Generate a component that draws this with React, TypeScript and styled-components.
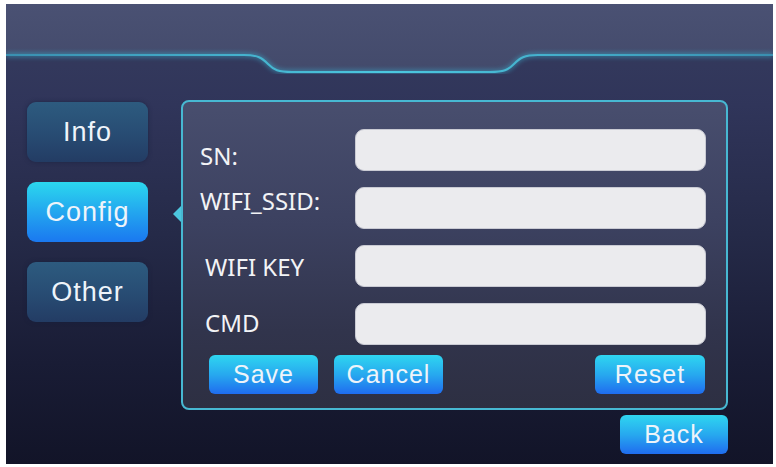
import React from "react"
import styled, { createGlobalStyle } from "styled-components"

const GlobalStyle = createGlobalStyle`
  html, body {
    margin: 0;
    padding: 0;
    background: #ffffff;
  }
`

const Screen = styled.div`
  width: 767px;
  height: 460px;
  margin: 4px 3px 3px 6px;
  background: linear-gradient(180deg, #373d5f 0%, #30355a 22%, #252a48 50%, #191c35 78%, #121428 100%);
  display: flex;
  flex-direction: column;
  overflow: hidden;
`

const Header = styled.div`
  height: 70px;
  flex-shrink: 0;
`

const Body = styled.div`
  display: flex;
  align-items: flex-start;
  padding: 26px 0 0 21px;
`

const Nav = styled.div`
  display: flex;
  flex-direction: column;
  gap: 20px;
  margin-top: 2px;
  width: 121px;
`

const NavButton = styled.div<{ $active?: boolean }>`
  height: 60px;
  border-radius: 9px;
  display: flex;
  align-items: center;
  justify-content: center;
  font-family: "Liberation Sans", Arial, sans-serif;
  font-size: 27px;
  letter-spacing: 1px;
  color: #eef4fa;
  background: ${p =>
    p.$active
      ? "linear-gradient(180deg, #2bd8ee 0%, #23a6ef 50%, #1a78f0 100%)"
      : "linear-gradient(180deg, #2d5b7f 0%, #284d74 50%, #233c64 100%)"};
  box-shadow: ${p => (p.$active ? "none" : "0 0 4px rgba(20, 30, 60, 0.6)")};
`

const Main = styled.div`
  display: flex;
  flex-direction: column;
  align-items: flex-end;
  margin-left: 33px;
`

const Panel = styled.div`
  position: relative;
  width: 547px;
  box-sizing: border-box;
  border: 2px solid #47b8d2;
  border-radius: 8px;
  background: linear-gradient(180deg, #484e6e 0%, #3c4160 40%, #31344c 75%, #2d2f42 100%);
  padding: 27px 20px 14px 17px;
  display: flex;
  flex-direction: column;
`

const Pointer = styled.div`
  position: absolute;
  left: -10px;
  top: 104px;
  width: 0;
  height: 0;
  border-top: 8px solid transparent;
  border-bottom: 8px solid transparent;
  border-right: 8px solid #4cc6de;
`

const Fields = styled.div`
  display: flex;
  flex-direction: column;
  gap: 16px;
`

const Row = styled.div`
  display: flex;
  align-items: center;
`

const Label = styled.div<{ $indent?: number; $dy?: number }>`
  width: 155px;
  box-sizing: border-box;
  padding-left: ${p => p.$indent ?? 0}px;
  transform: translateY(${p => p.$dy ?? 0}px);
  font-family: "Noto Sans", "Open Sans", sans-serif;
  font-size: 24px;
  color: #f2f3f6;
  white-space: nowrap;
`

const Field = styled.div`
  width: 351px;
  height: 42px;
  box-sizing: border-box;
  border-radius: 9px;
  background: #ebebee;
  border: 1px solid #c9cad3;
`

const Actions = styled.div`
  display: flex;
  align-items: center;
  gap: 16px;
  margin-top: 10px;
  padding-left: 9px;
  padding-right: 1px;
`

const Spacer = styled.div`
  flex: 1;
`

const Button = styled.div<{ $w: number }>`
  width: ${p => p.$w}px;
  height: 39px;
  border-radius: 6px;
  display: flex;
  align-items: center;
  justify-content: center;
  font-family: "Liberation Sans", Arial, sans-serif;
  font-size: 25px;
  letter-spacing: 1px;
  color: #eef4fa;
  background: linear-gradient(180deg, #2fd6f0 0%, #27a9ef 50%, #1f6cef 100%);
`

const BackButton = styled(Button)`
  margin-top: 5px;
`

function HeaderArt() {
  const line =
    "M0 51 H238 C252 51 256 54 262 60 C268 66 272 68 286 68 H484 C498 68 502 66 508 60 C514 54 518 51 532 51 H767"
  return (
    <svg width="767" height="70" viewBox="0 0 767 70">
      <defs>
        <linearGradient id="hdr" x1="0" y1="0" x2="0" y2="1">
          <stop offset="0" stopColor="#4a5173" />
          <stop offset="1" stopColor="#434a6b" />
        </linearGradient>
        <linearGradient id="ln" x1="0" y1="0" x2="1" y2="0">
          <stop offset="0" stopColor="#3a8fb0" />
          <stop offset="0.5" stopColor="#4cc8e0" />
          <stop offset="1" stopColor="#3a8fb0" />
        </linearGradient>
        <filter id="glow" x="-5%" y="-50%" width="110%" height="200%">
          <feGaussianBlur stdDeviation="2" />
        </filter>
      </defs>
      <path d={line + " V0 H0 Z"} fill="url(#hdr)" />
      <path d={line} fill="none" stroke="#3bb4d4" strokeWidth="5" opacity="0.45" filter="url(#glow)" />
      <path d={line} fill="none" stroke="url(#ln)" strokeWidth="2" />
    </svg>
  )
}

const fields = [
  { label: "SN:", indent: 0, dy: 5 },
  { label: "WIFI_SSID:", indent: 0, dy: -8 },
  { label: "WIFI KEY", indent: 5, dy: 0 },
  { label: "CMD", indent: 5, dy: -2 },
]

export default function App() {
  return (
    <>
      <GlobalStyle />
      <Screen>
        <Header>
          <HeaderArt />
        </Header>
        <Body>
          <Nav>
            <NavButton>Info</NavButton>
            <NavButton $active>Config</NavButton>
            <NavButton>Other</NavButton>
          </Nav>
          <Main>
            <Panel>
              <Pointer />
              <Fields>
                {fields.map(f => (
                  <Row key={f.label}>
                    <Label $indent={f.indent} $dy={f.dy}>{f.label}</Label>
                    <Field />
                  </Row>
                ))}
              </Fields>
              <Actions>
                <Button $w={109}>Save</Button>
                <Button $w={109}>Cancel</Button>
                <Spacer />
                <Button $w={110}>Reset</Button>
              </Actions>
            </Panel>
            <BackButton $w={108}>Back</BackButton>
          </Main>
        </Body>
      </Screen>
    </>
  )
}
